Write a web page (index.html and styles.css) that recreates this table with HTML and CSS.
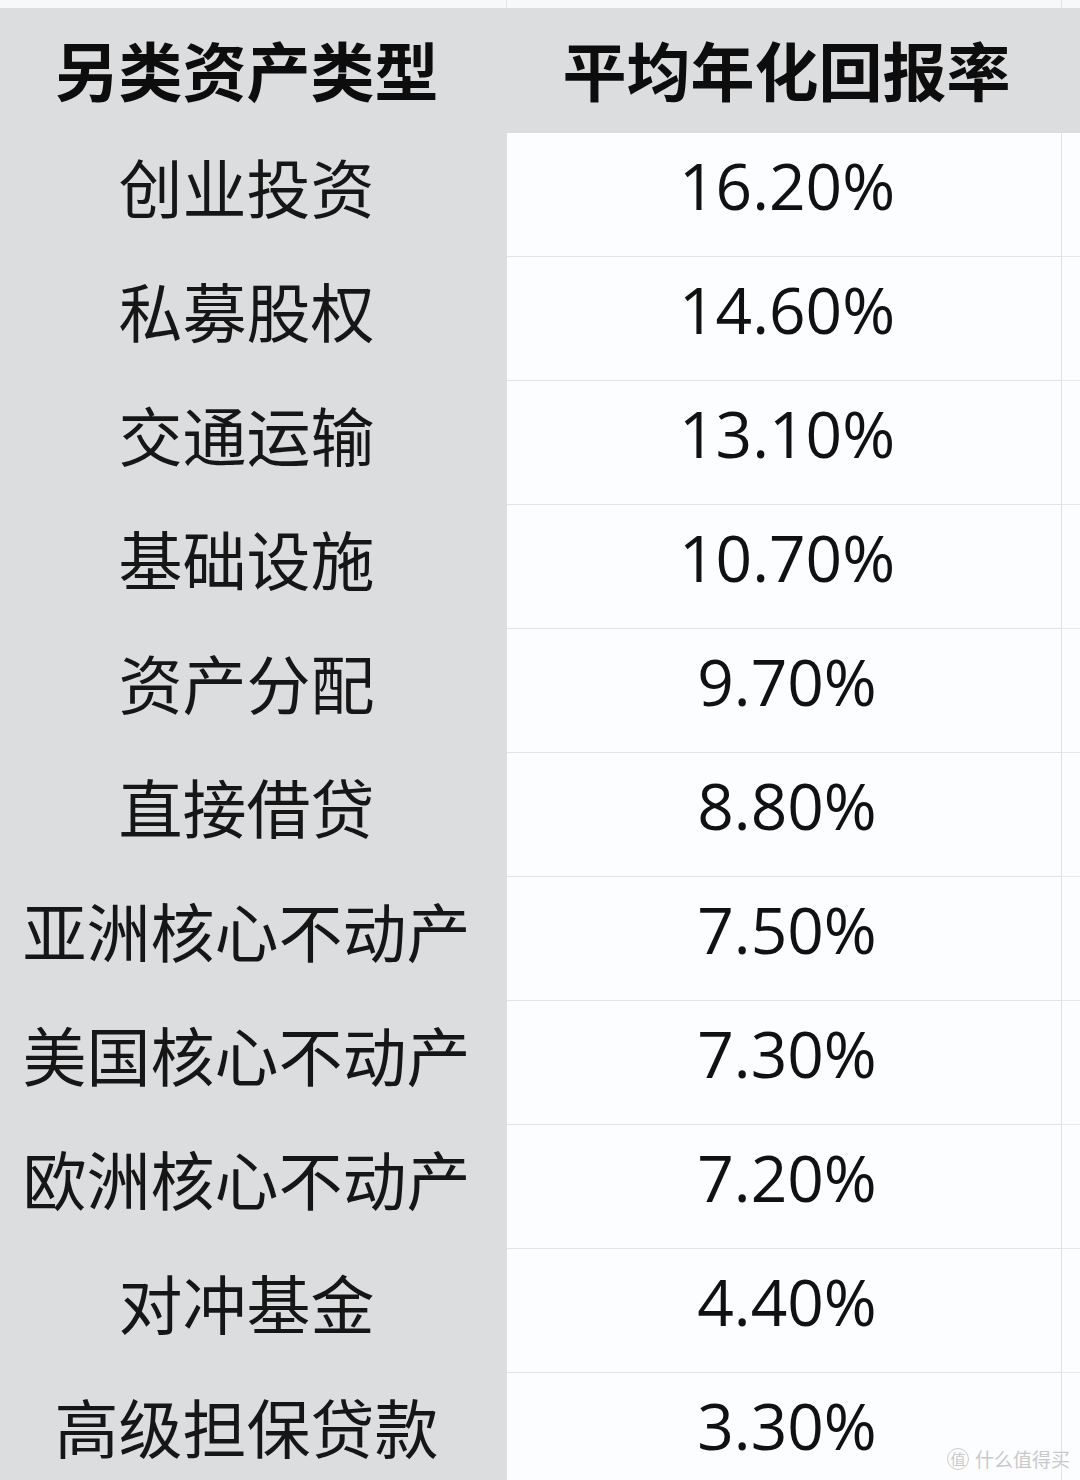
FILE: index.html
```html
<!DOCTYPE html>
<html lang="zh-CN">
<head>
<meta charset="utf-8">
<title>另类资产类型 平均年化回报率</title>
<link rel="stylesheet" href="styles.css">
</head>
<body>
<div class="page">
  <div class="top-strip"><span class="top-a"></span><span class="top-b"></span><span class="top-c"></span></div>
  <div class="table">
    <div class="head name">另类资产类型</div>
    <div class="head rate">平均年化回报率</div>

    <div class="cell name">创业投资</div><div class="cell rate">16.20%</div><div class="cell pad"></div>
    <div class="cell name">私募股权</div><div class="cell rate">14.60%</div><div class="cell pad"></div>
    <div class="cell name">交通运输</div><div class="cell rate">13.10%</div><div class="cell pad"></div>
    <div class="cell name">基础设施</div><div class="cell rate">10.70%</div><div class="cell pad"></div>
    <div class="cell name">资产分配</div><div class="cell rate">9.70%</div><div class="cell pad"></div>
    <div class="cell name">直接借贷</div><div class="cell rate">8.80%</div><div class="cell pad"></div>
    <div class="cell name">亚洲核心不动产</div><div class="cell rate">7.50%</div><div class="cell pad"></div>
    <div class="cell name">美国核心不动产</div><div class="cell rate">7.30%</div><div class="cell pad"></div>
    <div class="cell name">欧洲核心不动产</div><div class="cell rate">7.20%</div><div class="cell pad"></div>
    <div class="cell name">对冲基金</div><div class="cell rate">4.40%</div><div class="cell pad"></div>
    <div class="cell name">高级担保贷款</div><div class="cell rate">3.30%</div><div class="cell pad"></div>
  </div>
  <div class="watermark"><span class="wm-logo">值</span><span class="wm-text">什么值得买</span></div>
</div>
</body>
</html>
```

FILE: styles.css
```css
html, body {
  margin: 0;
  padding: 0;
  background: #fcfdfe;
}
.page {
  position: relative;
  width: 1080px;
  height: 1480px;
  overflow: hidden;
  font-family: "Noto Sans CJK SC", "Noto Sans", sans-serif;
  color: #151515;
}
.top-strip {
  display: grid;
  grid-template-columns: 507px 555px 18px;
  height: 8px;
  background: #f7f8f9;
}
.top-a { border-right: 1px solid #e6e6e6; }
.top-b { border-right: 1px solid #e2e2e2; }
.table {
  display: grid;
  grid-template-columns: 507px 555px 18px;
  grid-auto-rows: 124px;
  grid-template-rows: 125px;
}
.head {
  background: #dcdddf;
  display: flex;
  align-items: center;
  justify-content: center;
  font-weight: 700;
  font-size: 64px;
  color: #0d0d0d;
  padding-bottom: 6px;
  box-sizing: border-box;
}
.head.name { padding-right: 14px; }
.head.rate { grid-column: 2 / 4; padding-right: 14px; }
.cell {
  box-sizing: border-box;
  display: flex;
  align-items: center;
  justify-content: center;
  padding-bottom: 18px;
}
.cell.name {
  background: #dcdddf;
  font-size: 64px;
  padding-right: 14px;
  padding-bottom: 20px;
  color: #161616;
}
.cell.rate {
  background: #fcfdfe;
  border-bottom: 1px solid #e2e3e5;
  border-right: 1px solid #e0e1e3;
  font-family: "Open Sans", "Noto Sans", sans-serif;
  font-size: 64px;
  color: #111;
  padding-left: 6px;
}
.cell.pad {
  background: #fcfdfe;
  border-bottom: 1px solid #e8e9eb;
}
.watermark {
  position: absolute;
  right: 10px;
  bottom: 8px;
  display: flex;
  align-items: center;
  gap: 6px;
  color: #c9c9c9;
  font-family: "Noto Sans CJK SC", sans-serif;
}
.wm-logo {
  width: 22px;
  height: 22px;
  border: 1.5px solid #cdcdcd;
  border-radius: 50%;
  display: flex;
  align-items: center;
  justify-content: center;
  font-size: 15px;
  box-sizing: border-box;
}
.wm-text {
  font-size: 19px;
  letter-spacing: 0px;
}
```
